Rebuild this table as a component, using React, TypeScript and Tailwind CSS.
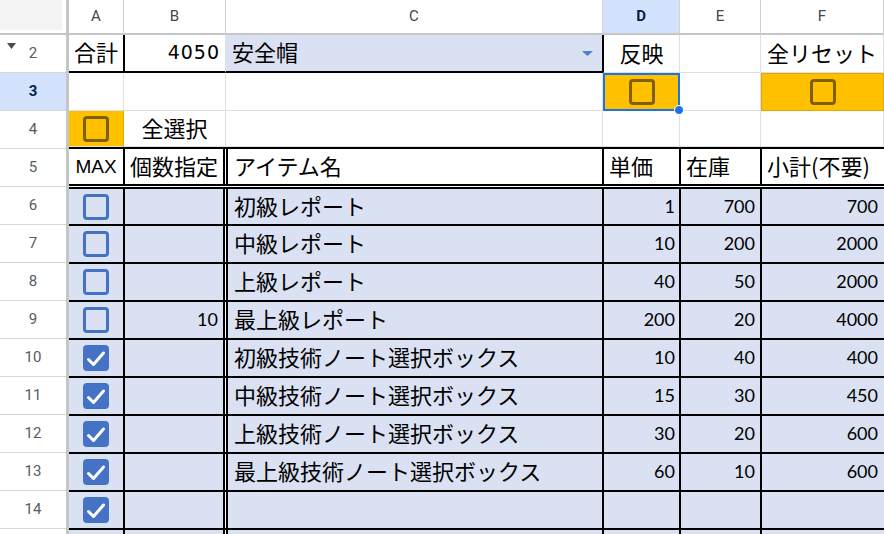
import React from "react";

type Row = {
  checked: boolean;
  qty: string;
  name: string;
  price: string;
  stock: string;
  sub: string;
};

const rows: Row[] = [
  { checked: false, qty: "", name: "初級レポート", price: "1", stock: "700", sub: "700" },
  { checked: false, qty: "", name: "中級レポート", price: "10", stock: "200", sub: "2000" },
  { checked: false, qty: "", name: "上級レポート", price: "40", stock: "50", sub: "2000" },
  { checked: false, qty: "10", name: "最上級レポート", price: "200", stock: "20", sub: "4000" },
  { checked: true, qty: "", name: "初級技術ノート選択ボックス", price: "10", stock: "40", sub: "400" },
  { checked: true, qty: "", name: "中級技術ノート選択ボックス", price: "15", stock: "30", sub: "450" },
  { checked: true, qty: "", name: "上級技術ノート選択ボックス", price: "30", stock: "20", sub: "600" },
  { checked: true, qty: "", name: "最上級技術ノート選択ボックス", price: "60", stock: "10", sub: "600" },
  { checked: true, qty: "", name: "", price: "", stock: "", sub: "" },
];

function Box({ kind }: { kind: "orange" | "blue" | "checked" }) {
  if (kind === "checked") {
    return (
      <div className="w-[26px] h-[26px] rounded-[4px] bg-[#4472c4] flex items-center justify-center">
        <svg width="26" height="26" viewBox="0 0 26 26">
          <path
            d="M5.5 14.5 L10.5 19.5 L20.5 8"
            fill="none"
            stroke="#ffffff"
            strokeWidth="3"
            strokeLinecap="round"
            strokeLinejoin="round"
          />
        </svg>
      </div>
    );
  }
  if (kind === "orange") {
    return <div className="w-[26px] h-[26px] rounded-[4px] border-[3px] border-[#7f6000]" />;
  }
  return <div className="w-[26px] h-[26px] rounded-[4px] border-[3px] border-[#4472c4]" />;
}

function ColHead({ label, w, active }: { label: string; w: string; active?: boolean }) {
  return (
    <div
      className={
        w +
        " h-full shrink-0 border-r border-b-2 border-r-[#cfd1d3] border-b-[#c4c7c5] flex items-center justify-center " +
        (active ? "bg-[#d3e3fd] text-[#041e49] font-bold" : "bg-white text-[#444746]")
      }
    >
      {label}
    </div>
  );
}

function RowHead({ n, active, hiddenMark }: { n: number | null; active?: boolean; hiddenMark?: boolean }) {
  return (
    <div
      className={
        "relative h-[38px] shrink-0 border-b border-[#d6d6d6] flex items-center justify-center " +
        (active ? "bg-[#d3e3fd] text-[#041e49] font-bold" : "bg-white text-[#575b5f]")
      }
    >
      {hiddenMark && (
        <svg className="absolute left-[7px] top-[8px]" width="9" height="6" viewBox="0 0 9 6">
          <polygon points="0,0 9,0 4.5,6" fill="#4a4a4a" />
        </svg>
      )}
      {n}
    </div>
  );
}

export default function App() {
  const rowNums = [2, 3, 4, 5, 6, 7, 8, 9, 10, 11, 12, 13, 14];
  return (
    <div className="w-[884px] h-[534px] overflow-hidden bg-white font-['Noto_Sans_CJK_JP',sans-serif] text-[22px] text-black leading-none">
      {/* column header */}
      <div className="flex h-[35px] font-['Roboto',sans-serif] text-[15px]">
        <div className="w-[69px] h-full shrink-0 border-r-[3px] border-b-2 border-[#c4c7c5] bg-white">
          <div className="w-[62px] h-[30px] bg-[#f3f3f3]" />
        </div>
        <ColHead label="A" w="w-[55px]" />
        <ColHead label="B" w="w-[102px]" />
        <ColHead label="C" w="w-[377px]" />
        <ColHead label="D" w="w-[77px]" active />
        <ColHead label="E" w="w-[81px]" />
        <ColHead label="F" w="w-[123px]" />
      </div>

      <div className="flex">
        {/* row headers */}
        <div className="w-[69px] shrink-0 border-r-[3px] border-[#c4c7c5] flex flex-col font-['Roboto',sans-serif] text-[15px]">
          {rowNums.map((n) => (
            <RowHead key={n} n={n} active={n === 3} hiddenMark={n === 2} />
          ))}
          <RowHead n={null} />
        </div>

        {/* sheet */}
        <div className="w-[815px] flex flex-col">
          {/* row 2 */}
          <div className="flex h-[38px]">
            <div className="w-[55px] shrink-0 border-r border-b-2 border-black flex items-center justify-center pb-[4px]">
              合計
            </div>
            <div className="w-[102px] shrink-0 border-l border-b-2 border-black border-r border-r-[#e0e0e0] flex items-center justify-end pr-[5px] pb-[2px] font-['DejaVu_Sans',sans-serif] text-[19px] tracking-[1px]">
              4050
            </div>
            <div className="w-[377px] shrink-0 bg-[#d9e1f2] border-r border-b-2 border-black flex items-center justify-between pl-[6px] pr-[9px]">
              <span className="pb-[4px]">安全帽</span>
              <svg width="11" height="5" viewBox="0 0 11 5">
                <polygon points="0,0 11,0 5.5,5" fill="#4f7ed6" />
              </svg>
            </div>
            <div className="w-[77px] shrink-0 border-l border-l-black border-r border-b border-r-[#e0e0e0] border-b-[#e0e0e0] flex items-center justify-center pb-[4px]">
              反映
            </div>
            <div className="w-[81px] shrink-0 border-r border-b border-[#e0e0e0]" />
            <div className="w-[123px] shrink-0 border-r border-b border-[#e0e0e0] flex items-center justify-center pb-[4px]">
              全リセット
            </div>
          </div>

          {/* row 3 */}
          <div className="flex h-[38px]">
            <div className="w-[55px] shrink-0 border-r border-b border-[#e0e0e0]" />
            <div className="w-[102px] shrink-0 border-r border-b border-[#e0e0e0]" />
            <div className="w-[377px] shrink-0 border-r border-b border-[#e0e0e0]" />
            <div className="relative w-[77px] shrink-0 bg-[#ffc000] border-2 border-[#1a73e8] flex items-center justify-center">
              <Box kind="orange" />
              <div className="absolute -right-[6px] -bottom-[6px] w-[10px] h-[10px] rounded-full bg-[#1a73e8] border border-white z-10" />
            </div>
            <div className="w-[81px] shrink-0 border-r border-b border-[#e0e0e0]" />
            <div className="w-[123px] shrink-0 bg-[#ffc000] border border-[#e3a800] flex items-center justify-center">
              <Box kind="orange" />
            </div>
          </div>

          {/* row 4 */}
          <div className="flex h-[36px]">
            <div className="w-[55px] shrink-0 bg-[#ffc000] border-r border-b border-r-[#e3a800] border-b-[#e0e0e0] flex items-center justify-center">
              <Box kind="orange" />
            </div>
            <div className="w-[102px] shrink-0 border-r border-b border-[#e0e0e0] flex items-center justify-center pb-[3px]">
              全選択
            </div>
            <div className="w-[377px] shrink-0 border-r border-b border-[#e0e0e0]" />
            <div className="w-[77px] shrink-0 border-r border-b border-[#e0e0e0]" />
            <div className="w-[81px] shrink-0 border-r border-b border-[#e0e0e0]" />
            <div className="w-[123px] shrink-0 border-r border-b border-[#e0e0e0]" />
          </div>

          {/* data block */}
          <div className="flex flex-col gap-y-[2px] bg-black pt-[2px]">
            {/* row 5 header */}
            <div className="flex gap-x-[2px] h-[35px]">
              <div className="w-[54px] shrink-0 bg-white flex items-center justify-center font-['Liberation_Sans',sans-serif] text-[19px]">
                MAX
              </div>
              <div className="w-[98px] shrink-0 bg-white flex items-center justify-center pb-[4px]">個数指定</div>
              <div className="w-px shrink-0 bg-white" />
              <div className="w-[374px] shrink-0 bg-white flex items-center pl-[6px] pb-[4px]">アイテム名</div>
              <div className="w-[75px] shrink-0 bg-white flex items-center pl-[5px] pb-[4px]">単価</div>
              <div className="w-[79px] shrink-0 bg-white flex items-center pl-[5px] pb-[4px]">在庫</div>
              <div className="flex-1 bg-white flex items-center pl-[5px] pb-[4px]">小計(不要)</div>
            </div>
            <div className="h-px bg-white" />
            {rows.map((r, i) => (
              <div key={i} className={"flex gap-x-[2px] " + (i === 0 ? "h-[35px]" : "h-[36px]")}>
                <div className="w-[54px] shrink-0 bg-[#d9e1f2] flex items-center justify-center">
                  <Box kind={r.checked ? "checked" : "blue"} />
                </div>
                <div className="w-[98px] shrink-0 bg-[#d9e1f2] flex items-center justify-end pr-[5px] pb-[2px] font-['Lato',sans-serif] text-[18px]">
                  {r.qty}
                </div>
                <div className="w-px shrink-0 bg-white" />
                <div className="w-[374px] shrink-0 bg-[#d9e1f2] flex items-center pl-[6px] pb-[4px] whitespace-nowrap">
                  {r.name}
                </div>
                <div className="w-[75px] shrink-0 bg-[#d9e1f2] flex items-center justify-end pr-[4px] pb-[2px] font-['Lato',sans-serif] text-[18px]">
                  {r.price}
                </div>
                <div className="w-[79px] shrink-0 bg-[#d9e1f2] flex items-center justify-end pr-[5px] pb-[2px] font-['Lato',sans-serif] text-[18px]">
                  {r.stock}
                </div>
                <div className="flex-1 bg-[#d9e1f2] flex items-center justify-end pr-[6px] pb-[2px] font-['Lato',sans-serif] text-[18px]">
                  {r.sub}
                </div>
              </div>
            ))}
            {/* row 15 */}
            <div className="flex gap-x-[2px] h-[36px]">
              <div className="w-[54px] shrink-0 bg-[#d9e1f2]" />
              <div className="w-[98px] shrink-0 bg-[#d9e1f2]" />
              <div className="w-px shrink-0 bg-white" />
              <div className="w-[374px] shrink-0 bg-[#d9e1f2]" />
              <div className="w-[75px] shrink-0 bg-[#d9e1f2]" />
              <div className="w-[79px] shrink-0 bg-[#d9e1f2]" />
              <div className="flex-1 bg-[#d9e1f2]" />
            </div>
          </div>
        </div>
      </div>
    </div>
  );
}
